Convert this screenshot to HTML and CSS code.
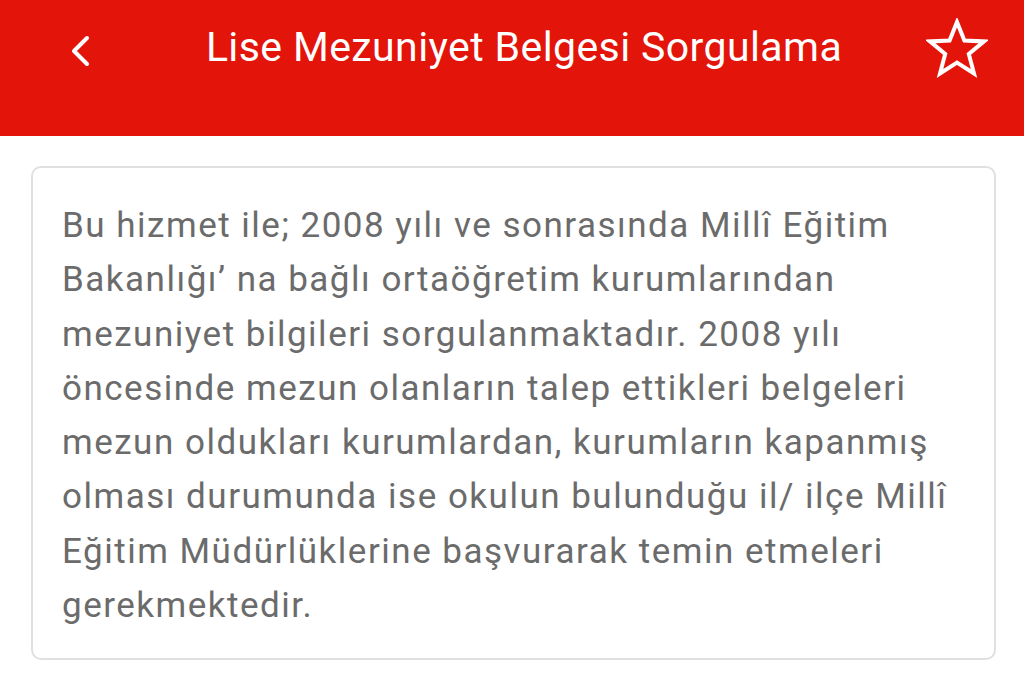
FILE: index.html
```html
<!DOCTYPE html>
<html lang="tr">
<head>
    <meta charset="UTF-8">
    <meta name="viewport" content="width=device-width, initial-scale=1.0">
    <title>Lise Mezuniyet Belgesi Sorgulama</title>
    <link rel="stylesheet" href="styles.css">
</head>
<body>

<!-- Üst bar: geri, başlık, favori -->
<header class="topbar">
    <button class="icon-btn back" aria-label="Geri">
        <svg width="24" height="32" viewBox="0 0 24 32">
            <path d="M19 3 L6 16 L19 29" fill="none" stroke="#fff" stroke-width="4" stroke-linecap="round" stroke-linejoin="round"/>
        </svg>
    </button>
    <h1 class="title">Lise Mezuniyet Belgesi Sorgulama</h1>
    <button class="icon-btn star" aria-label="Favori">
        <svg width="62" height="62" viewBox="0 0 62 62">
            <path d="M31 4 L38.4 22.6 L58 23.4 L42.8 36 L48 55.5 L31 44.6 L14 55.5 L19.2 36 L4 23.4 L23.6 22.6 Z" fill="none" stroke="#fff" stroke-width="4" stroke-linejoin="miter"/>
        </svg>
    </button>
</header>

<main class="content">
    <div class="info-card">
        <p>Bu hizmet ile; 2008 yılı ve sonrasında Millî Eğitim Bakanlığı’ na bağlı ortaöğretim kurumlarından mezuniyet bilgileri sorgulanmaktadır. 2008 yılı öncesinde mezun olanların talep ettikleri belgeleri mezun oldukları kurumlardan, kurumların kapanmış olması durumunda ise okulun bulunduğu il/ ilçe Millî Eğitim Müdürlüklerine başvurarak temin etmeleri gerekmektedir.</p>
    </div>
</main>

</body>
</html>
```

FILE: styles.css
```css
* {
    margin: 0;
    padding: 0;
    box-sizing: border-box;
}

body {
    font-family: 'Roboto', 'Liberation Sans', sans-serif;
    background: #fff;
    width: 1024px;
    height: 677px;
    overflow: hidden;
}

.topbar {
    height: 136px;
    background: #e3140a;
    display: flex;
    align-items: flex-start;
    padding: 18px 36px 0 68px;
}

.icon-btn {
    background: none;
    border: none;
    display: flex;
    align-items: center;
    justify-content: center;
}

.back {
    margin-top: 17px;
}

.title {
    flex: 1;
    color: #fff;
    font-weight: 400;
    font-size: 41px;
    text-align: center;
    margin-top: 5px;
    padding-left: 30px;
    letter-spacing: 0.4px;
    white-space: nowrap;
}

.content {
    padding: 30px 28px 0 31px;
}

.info-card {
    border: 2px solid #e0e0e0;
    border-radius: 10px;
    height: 494px;
    padding: 31px 8px 0 29px;
}

.info-card p {
    color: #6b6b6b;
    font-size: 35px;
    line-height: 54.3px;
    letter-spacing: 1.5px;
}
```
